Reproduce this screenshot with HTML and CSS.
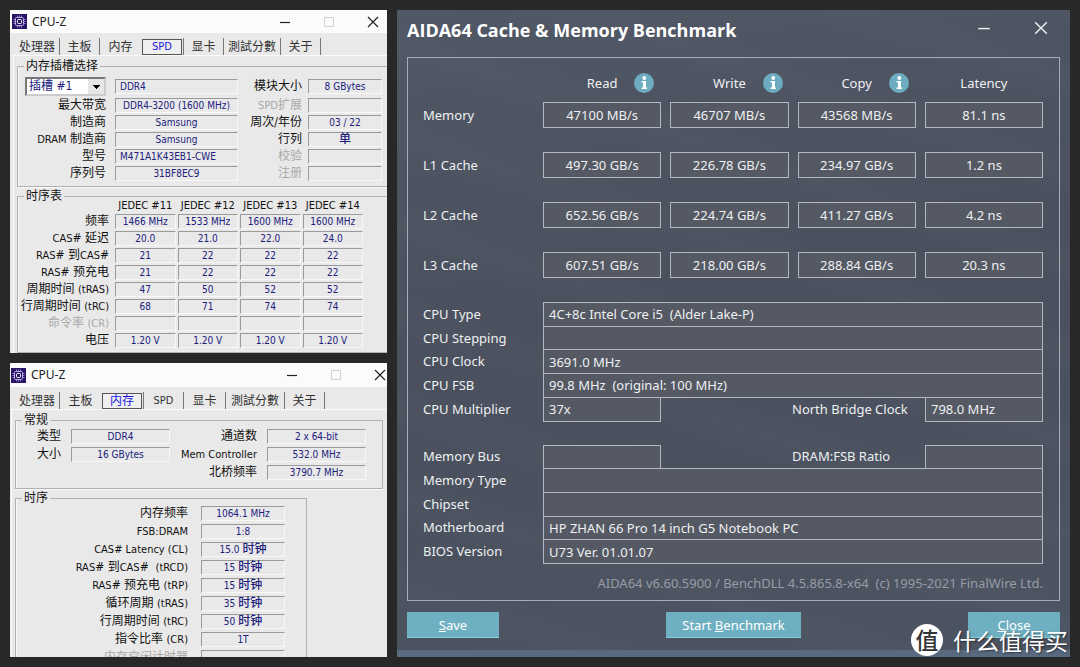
FILE: index.html
```
<!DOCTYPE html>
<html lang="zh-CN">
<head>
<meta charset="utf-8">
<title>CPU-Z / AIDA64</title>
<link rel="stylesheet" href="styles.css">
</head>
<body>
<svg width="0" height="0" class="defs" aria-hidden="true">
  <symbol id="chip" viewBox="0 0 15 15">
    <rect width="15" height="15" fill="#2a1468"/>
    <path d="M5.500 1.500v12M7.500 1.500v12M9.500 1.500v12M1.500 5.500h12M1.500 7.500h12M1.500 9.500h12" stroke="#8f7fc8" fill="none"/>
    <rect x="3.500" y="3.500" width="8" height="8" rx="1" fill="#2a1468" stroke="#b9aee0"/>
    <rect x="5.500" y="5.500" width="4" height="4" rx="1" fill="#2a1468" stroke="#fff"/>
  </symbol>
  <symbol id="min" viewBox="0 0 12 12"><path d="M1 6.500h10" stroke="currentColor" fill="none" stroke-width="1.200"/></symbol>
  <symbol id="max" viewBox="0 0 12 12"><path d="M1.500 1.500h9v9h-9z" stroke="currentColor" fill="none"/></symbol>
  <symbol id="cross" viewBox="0 0 12 12"><path d="M1 1l10 10M11 1L1 11" stroke="currentColor" fill="none" stroke-width="1.200"/></symbol>
  <symbol id="info" viewBox="0 0 20 20">
    <circle cx="10" cy="10" r="10" fill="#6cabc0"/>
    <circle cx="10.300" cy="5" r="1.900" fill="#fff"/>
    <path d="M7.500 8h4.500v6.500h1v1.500H7.500v-1.500h1.500V9.500H7.500z" fill="#fff"/>
  </symbol>
</svg>
<main class="desk">
  <div class="left">
    <section class="win spd">
      <header class="bar">
        <svg class="logo"><use href="#chip"/></svg><h2>CPU-Z</h2>
        <button aria-label="最小化"><svg><use href="#min"/></svg></button>
        <button aria-label="最大化" disabled><svg><use href="#max"/></svg></button>
        <button aria-label="关闭"><svg><use href="#cross"/></svg></button>
      </header>
      <nav class="tabs">
        <button>处理器</button><button>主板</button><button class="before">内存</button><button class="on"><span>SPD</span></button><button>显卡</button><button>測試分數</button><button>关于</button>
      </nav>
      <div class="page">
        <fieldset class="group slot">
          <legend>内存插槽选择</legend>
          <div class="pairs">
            <div class="pick"><select aria-label="插槽"><option>插槽 #1</option></select></div><span class="val start">DDR4</span>
            <span class="lab">模块大小</span><span class="val">8 GBytes</span>
            <span class="lab">最大带宽</span><span class="val">DDR4-3200 (1600 MHz)</span>
            <span class="lab dim"><small>SPD</small>扩展</span><span class="val"></span>
            <span class="lab">制造商</span><span class="val">Samsung</span>
            <span class="lab">周次/年份</span><span class="val">03 / 22</span>
            <span class="lab"><small>DRAM</small> 制造商</span><span class="val">Samsung</span>
            <span class="lab">行列</span><span class="val"><b>单</b></span>
            <span class="lab">型号</span><span class="val start">M471A1K43EB1-CWE</span>
            <span class="lab dim">校验</span><span class="val"></span>
            <span class="lab">序列号</span><span class="val">31BF8EC9</span>
            <span class="lab dim">注册</span><span class="val"></span>
          </div>
        </fieldset>
        <fieldset class="group jedec">
          <legend>时序表</legend>
          <table>
            <thead><tr><td></td><th>JEDEC #11</th><th>JEDEC #12</th><th>JEDEC #13</th><th>JEDEC #14</th></tr></thead>
            <tbody>
              <tr><th>频率</th><td><span class="val">1466 MHz</span></td><td><span class="val">1533 MHz</span></td><td><span class="val">1600 MHz</span></td><td><span class="val">1600 MHz</span></td></tr>
              <tr><th><small>CAS</small># 延迟</th><td><span class="val">20.0</span></td><td><span class="val">21.0</span></td><td><span class="val">22.0</span></td><td><span class="val">24.0</span></td></tr>
              <tr><th><small>RAS</small># 到<small>CAS</small>#</th><td><span class="val">21</span></td><td><span class="val">22</span></td><td><span class="val">22</span></td><td><span class="val">22</span></td></tr>
              <tr><th><small>RAS</small># 预充电</th><td><span class="val">21</span></td><td><span class="val">22</span></td><td><span class="val">22</span></td><td><span class="val">22</span></td></tr>
              <tr><th>周期时间 <small>(tRAS)</small></th><td><span class="val">47</span></td><td><span class="val">50</span></td><td><span class="val">52</span></td><td><span class="val">52</span></td></tr>
              <tr><th>行周期时间 <small>(tRC)</small></th><td><span class="val">68</span></td><td><span class="val">71</span></td><td><span class="val">74</span></td><td><span class="val">74</span></td></tr>
              <tr><th class="dim">命令率 <small>(CR)</small></th><td><span class="val"></span></td><td><span class="val"></span></td><td><span class="val"></span></td><td><span class="val"></span></td></tr>
              <tr><th>电压</th><td><span class="val">1.20 V</span></td><td><span class="val">1.20 V</span></td><td><span class="val">1.20 V</span></td><td><span class="val">1.20 V</span></td></tr>
            </tbody>
          </table>
        </fieldset>
      </div>
    </section>

    <section class="win mem">
      <header class="bar">
        <svg class="logo"><use href="#chip"/></svg><h2>CPU-Z</h2>
        <button aria-label="最小化"><svg><use href="#min"/></svg></button>
        <button aria-label="最大化" disabled><svg><use href="#max"/></svg></button>
        <button aria-label="关闭"><svg><use href="#cross"/></svg></button>
      </header>
      <nav class="tabs">
        <button>处理器</button><button class="before">主板</button><button class="on"><span>内存</span></button><button><small>SPD</small></button><button>显卡</button><button>測試分數</button><button>关于</button>
      </nav>
      <div class="page">
        <fieldset class="group general">
          <legend>常规</legend>
          <div class="pairs">
            <span class="lab">类型</span><span class="val">DDR4</span>
            <span class="lab">通道数</span><span class="val">2 x 64-bit</span>
            <span class="lab">大小</span><span class="val">16 GBytes</span>
            <span class="lab"><small>Mem Controller</small></span><span class="val">532.0 MHz</span>
            <span class="lab last">北桥频率</span><span class="val">3790.7 MHz</span>
          </div>
        </fieldset>
        <fieldset class="group timing">
          <legend>时序</legend>
          <div class="pairs">
            <span class="lab">内存频率</span><span class="val">1064.1 MHz</span>
            <span class="lab"><small>FSB:DRAM</small></span><span class="val">1:8</span>
            <span class="lab"><small>CAS# Latency (CL)</small></span><span class="val">15.0 <b>时钟</b></span>
            <span class="lab"><small>RAS</small># 到<small>CAS</small>#&nbsp; <small>(tRCD)</small></span><span class="val">15 <b>时钟</b></span>
            <span class="lab"><small>RAS</small># 预充电 <small>(tRP)</small></span><span class="val">15 <b>时钟</b></span>
            <span class="lab">循环周期 <small>(tRAS)</small></span><span class="val">35 <b>时钟</b></span>
            <span class="lab">行周期时间 <small>(tRC)</small></span><span class="val">50 <b>时钟</b></span>
            <span class="lab">指令比率 <small>(CR)</small></span><span class="val">1T</span>
            <span class="lab dim">内存空闲计时器</span><span class="val"></span>
          </div>
        </fieldset>
      </div>
    </section>
  </div>

  <section class="aida">
    <header class="head">
      <h1>AIDA64 Cache &amp; Memory Benchmark</h1>
      <button aria-label="Minimize"><svg><use href="#min"/></svg></button>
      <button aria-label="Close window"><svg><use href="#cross"/></svg></button>
    </header>
    <div class="panel">
      <table class="bench">
        <thead><tr><td></td>
          <th><div><span>Read</span><button aria-label="Read info"><svg><use href="#info"/></svg></button></div></th>
          <th><div><span>Write</span><button aria-label="Write info"><svg><use href="#info"/></svg></button></div></th>
          <th><div><span>Copy</span><button aria-label="Copy info"><svg><use href="#info"/></svg></button></div></th>
          <th><div><span>Latency</span></div></th></tr></thead>
        <tbody>
          <tr><th>Memory</th><td><span>47100 MB/s</span></td><td><span>46707 MB/s</span></td><td><span>43568 MB/s</span></td><td><span>81.1 ns</span></td></tr>
          <tr><th>L1 Cache</th><td><span>497.30 GB/s</span></td><td><span>226.78 GB/s</span></td><td><span>234.97 GB/s</span></td><td><span>1.2 ns</span></td></tr>
          <tr><th>L2 Cache</th><td><span>652.56 GB/s</span></td><td><span>224.74 GB/s</span></td><td><span>411.27 GB/s</span></td><td><span>4.2 ns</span></td></tr>
          <tr><th>L3 Cache</th><td><span>607.51 GB/s</span></td><td><span>218.00 GB/s</span></td><td><span>288.84 GB/s</span></td><td><span>20.3 ns</span></td></tr>
        </tbody>
      </table>
      <dl class="details">
        <dt>CPU Type</dt><dd>4C+8c Intel Core i5&nbsp; (Alder Lake-P)</dd>
        <dt>CPU Stepping</dt><dd></dd>
        <dt>CPU Clock</dt><dd>3691.0 MHz</dd>
        <dt>CPU FSB</dt><dd>99.8 MHz&nbsp; (original: 100 MHz)</dd>
        <dt>CPU Multiplier</dt><dd class="short">37x</dd><dt class="second">North Bridge Clock</dt><dd class="short">798.0 MHz</dd>
      </dl>
      <dl class="details">
        <dt>Memory Bus</dt><dd class="short"></dd><dt class="second">DRAM:FSB Ratio</dt><dd class="short"></dd>
        <dt>Memory Type</dt><dd></dd>
        <dt>Chipset</dt><dd></dd>
        <dt>Motherboard</dt><dd>HP ZHAN 66 Pro 14 inch G5 Notebook PC</dd>
        <dt>BIOS Version</dt><dd>U73 Ver. 01.01.07</dd>
      </dl>
      <p class="version">AIDA64 v6.60.5900 / BenchDLL 4.5.865.8-x64&nbsp; (c) 1995-2021 FinalWire Ltd.</p>
    </div>
    <footer class="actions">
      <button><u>S</u>ave</button>
      <button>Start <u>B</u>enchmark</button>
      <button><u>C</u>lose</button>
    </footer>
    <div class="mark"><span class="seal">值</span><span>什么值得买</span></div>
  </section>
</main>
</body>
</html>
```
FILE: styles.css
```
* { box-sizing: border-box; }
body {
  margin: 0;
  background: #282828;
  font-family: "DejaVu Sans Condensed", "Noto Sans CJK SC", sans-serif;
}
button { font: inherit; color: inherit; background: none; border: 0; padding: 0; }
h1, h2, p, dl, dd { margin: 0; }
.defs { position: absolute; }

.desk {
  display: grid;
  grid-template-columns: 377fr 673fr;
  gap: 10px;
  height: 100vh;
  padding: 10px;
}
.left { display: flex; flex-direction: column; gap: 10px; min-height: 0; min-width: 0; }

/* CPU-Z windows */
.win { background: #e9e9e9; overflow: hidden; color: #111; min-width: 0; }
.mem { flex: 1; min-height: 0; }
.bar { display: flex; align-items: center; height: 23px; background: #fbfbfb; padding: 0 8px 0 2px; }
.bar .logo { width: 15px; height: 15px; }
.bar h2 { flex: 1; margin-left: 5px; font: 12px/20px "Noto Sans", sans-serif; color: #222; }
.bar button { width: 12px; height: 12px; margin-left: 32px; color: #222; display: flex; }
.bar button:disabled { color: #d0d0d0; }
.bar button svg { width: 12px; height: 12px; }
.mem .bar { height: 24px; padding: 0 1px; }

.tabs { display: flex; align-items: stretch; height: 22px; padding: 5px 0 0 5px; font-size: 12px; line-height: 16px; color: #333; }
.tabs button { width: 40px; border-right: 1px solid #777; text-align: center; white-space: nowrap; }
.tabs button:first-child { width: 45px; }
.tabs .before { border-right-color: transparent; width: 42px; }
.tabs .on { width: 42px; color: #2018e0; padding-right: 1px; }
.tabs .on span { display: block; border: 1px solid #555; line-height: 14px; background: #efefef; }
.spd .tabs .on { font-size: 11px; }
.tabs button:nth-child(6) { width: 57px; }
.mem .tabs button:nth-child(5) { width: 42px; }
.mem .tabs button:nth-child(6) { width: 59px; }

.page { border-top: 1px solid #fafafa; border-left: 1px solid #fafafa; margin-left: 3px; padding: 3px 0 0 3px; }
.group { margin: 0; padding: 0; border: 1px solid #b0b0b0; box-shadow: inset 1px 0 #fafafa, 0 1px #fafafa; min-width: 0; }
legend { padding: 0 2px; margin-left: 6px; font-size: 12px; line-height: 14px; }
.pairs { display: grid; align-items: center; row-gap: 2px; }
small { font-size: 11px; }
.lab { text-align: right; font-size: 12px; line-height: 15px; white-space: nowrap; }
.dim { color: #a8a8a8; }
.val {
  display: block;
  height: 15px;
  font-size: 10px;
  line-height: 14px;
  text-align: center;
  color: #20207c;
  white-space: nowrap;
  border: 1px solid #f8f8f8;
  border-top-color: #9a9a9a;
  border-left-color: #9a9a9a;
}
.val b { font-size: 12px; font-weight: 500; line-height: 12px; }
.val.start { text-align: left; padding-left: 4px; }

.slot, .jedec { border-right: 0; }
.slot { height: 128px; }
.slot .pairs { grid-template-columns: 88px 123px 1fr 74px; column-gap: 9px; padding-right: 5px; margin-top: 4px; }
.slot .lab:nth-child(4n + 3) { margin-right: -3px; }
.pick { padding-left: 7px; }
.pick select {
  display: block;
  appearance: none;
  width: 100%;
  height: 19px;
  padding: 0 2px;
  font: 12px/15px "DejaVu Sans Condensed", "Noto Sans CJK SC", sans-serif;
  color: #20207c;
  border: 2px solid #777;
  border-right-color: #ccc;
  border-bottom-color: #ccc;
  border-radius: 0;
  background:
    conic-gradient(from 315deg at 50% 100%, #000 90deg, transparent 0) right 4px top 6px / 8px 4px no-repeat,
    linear-gradient(#e6e6e6, #e6e6e6) right / 16px 100% no-repeat,
    #fff;
}
.jedec { margin-top: 2px; padding-bottom: 2px; }
.jedec table { width: 345px; table-layout: fixed; border-collapse: collapse; margin-top: -4px; }
.jedec thead td { width: 95px; }
.jedec td, .jedec th { padding: 0 0 2px 2px; font-weight: 400; font-size: 12px; line-height: 15px; white-space: nowrap; }
.jedec tbody th { text-align: right; padding-right: 4px; height: 17px; }
.jedec thead th, .jedec thead td { font-size: 11px; line-height: 13px; padding-bottom: 2px; }

.mem .page { margin-left: 1px; }
.general { margin-right: 4px; height: 76px; }
.general .pairs { grid-template-columns: 43px 99px 1fr 99px; column-gap: 10px; padding: 0 16px 0 2px; row-gap: 3px; margin-top: 2px; }
.general .last { grid-column: 3; }
.timing { width: 292px; margin-top: 2px; }
.timing .pairs { grid-template-columns: 1fr 84px; column-gap: 13px; row-gap: 3px; padding-right: 21px; margin-top: 1px; }

/* AIDA64 window */
.aida {
  position: relative;
  display: flex;
  flex-direction: column;
  min-width: 0;
  padding: 0 10px 12px;
  border-bottom: 7px solid #596a80;
  font-family: "Noto Sans", sans-serif;
  font-size: 13px;
  color: #eef0f2;
  background:
    repeating-linear-gradient(18deg, rgba(255,255,255,0) 0 34px, rgba(255,255,255,0.015) 60px, rgba(255,255,255,0) 86px),
    linear-gradient(170deg, #505765, #4a505d 45%, #4c5361);
}
.head { display: flex; align-items: flex-start; height: 47px; padding: 8px 12px 0 0; }
.head h1 { flex: 1; font: 700 18px/25px "Open Sans", sans-serif; color: #fff; white-space: nowrap; }
.head button { display: flex; width: 14px; height: 14px; margin: 3px 0 0 43px; }
.head svg { width: 14px; height: 14px; }
.panel { flex: 1; min-height: 0; display: flex; flex-direction: column; border: 1px solid #a8acb5; padding: 15px 16px 3px 15px; }
.bench { width: 100%; table-layout: fixed; border-collapse: collapse; }
.bench thead td { width: 111px; }
.bench th { font-weight: 400; padding: 0; text-align: left; }
.bench thead th { padding: 0 0 9px 9px; }
.bench thead div { display: grid; grid-template-columns: 1fr auto 1fr; align-items: center; height: 20px; }
.bench thead span { grid-column: 2; }
.bench thead button { display: flex; width: 20px; height: 20px; margin-left: 17px; }
.bench thead svg { width: 20px; height: 20px; }
.bench tbody th { padding-bottom: 24px; }
.bench tbody td { padding: 0 0 24px 9px; }
.bench tbody span { display: block; height: 26px; line-height: 24px; text-align: center; border: 1px solid #b4b7be; background: #555963; }
.details { flex: 1; display: grid; grid-template-columns: 120px 118fr 131fr 133fr 118fr; grid-auto-rows: 1fr; }
.details + .details { margin-top: 24px; }
.details dt { grid-column: 1; display: flex; align-items: center; }
.details dd { grid-column: 2 / -1; display: flex; align-items: center; padding-left: 5px; margin-bottom: -1px; border: 1px solid #b4b7be; background: #555963; line-height: 18px; }
.details .short { grid-column: 2; }
.details .second { grid-column: 4; }
.details .second + .short { grid-column: 5; }
.version { text-align: right; line-height: 20px; margin: 10px 0 4px; color: #989ca4; white-space: nowrap; }
.actions { display: grid; grid-template-columns: 92px 135px 92px; justify-content: space-between; margin-top: 11px; }
.actions button { height: 26px; background: #6eafc1; color: #fff; line-height: 24px; border-bottom: 1px solid #7fd0dc; }
.mark { position: absolute; right: 2px; bottom: -6px; display: flex; align-items: center; gap: 10px; color: #fff; font: 23px/32px "Noto Sans CJK SC", sans-serif; text-shadow: 1px 1px 2px rgba(0,0,0,0.500); }
.seal { width: 32px; height: 32px; border-radius: 50%; background: #fff; color: #333; text-align: center; line-height: 31px; font-weight: 500; text-shadow: none; }
```
